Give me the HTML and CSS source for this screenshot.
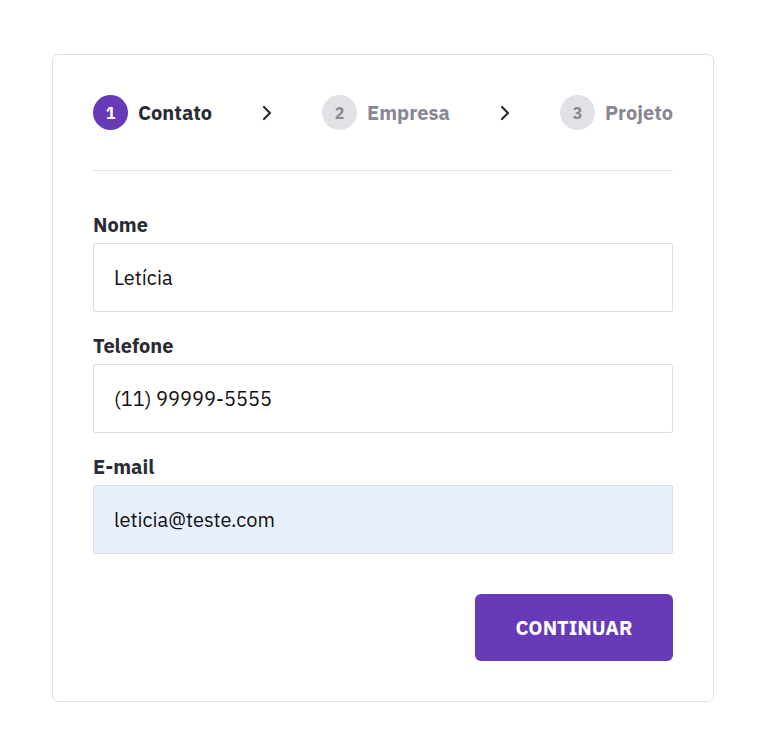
FILE: index.html
```html
<!DOCTYPE html>
<html lang="pt-BR">
<head>
<meta charset="utf-8">
<title>Cadastro</title>
<link rel="stylesheet" href="styles.css">
</head>
<body>
<div class="card">
  <div class="stepper">
    <div class="step step-active"><span class="step-num">1</span><span class="step-label">Contato</span></div>
    <svg class="chev" width="12" height="16" viewBox="0 0 12 16"><polyline points="3,2 9,8 3,14" fill="none" stroke="#2b2b33" stroke-width="2.2" stroke-linecap="round" stroke-linejoin="round"/></svg>
    <div class="step"><span class="step-num">2</span><span class="step-label">Empresa</span></div>
    <svg class="chev" width="12" height="16" viewBox="0 0 12 16"><polyline points="3,2 9,8 3,14" fill="none" stroke="#2b2b33" stroke-width="2.2" stroke-linecap="round" stroke-linejoin="round"/></svg>
    <div class="step"><span class="step-num">3</span><span class="step-label">Projeto</span></div>
  </div>
  <form class="form">
    <div class="field">
      <label class="label">Nome</label>
      <div class="input">Letícia</div>
    </div>
    <div class="field">
      <label class="label">Telefone</label>
      <div class="input">(11) 99999-5555</div>
    </div>
    <div class="field">
      <label class="label">E-mail</label>
      <div class="input input-filled">leticia@teste.com</div>
    </div>
    <div class="actions">
      <button type="button" class="btn">CONTINUAR</button>
    </div>
  </form>
</div>
</body>
</html>
```
FILE: styles.css
```css
* { box-sizing: border-box; }
body {
  margin: 0;
  padding: 54px 0 0 52px;
  background: #fff;
  font-family: "IBM Plex Sans", "Noto Sans", "Open Sans", sans-serif;
  color: #2b2b33;
}
.card {
  width: 662px;
  height: 648px;
  border: 1px solid #e1e1e4;
  border-radius: 6px;
  padding: 40px;
}
.stepper {
  display: flex;
  align-items: center;
  justify-content: space-between;
  height: 35px;
}
.step {
  display: flex;
  align-items: center;
  gap: 10px;
}
.step-num {
  width: 35px;
  height: 35px;
  border-radius: 50%;
  background: #e2e1e6;
  color: #8a8793;
  font-size: 16px;
  font-weight: 700;
  display: flex;
  align-items: center;
  justify-content: center;
}
.step-label {
  font-size: 20px;
  font-weight: 700;
  color: #8a8793;
}
.step-active .step-num { background: #673ab7; color: #fff; }
.step-active .step-label { color: #2b2b33; }
.chev { display: block; }
.form {
  margin-top: 40px;
  border-top: 1px solid #e4e4e7;
  padding-top: 42px;
  display: flex;
  flex-direction: column;
  gap: 22px;
}
.field { display: flex; flex-direction: column; }
.label {
  font-size: 20px;
  font-weight: 700;
  line-height: 24px;
  margin-bottom: 6px;
  color: #2b2b33;
}
.input {
  height: 69px;
  border: 1px solid #dedede;
  border-radius: 2px;
  padding: 0 20px;
  display: flex;
  align-items: center;
  font-size: 20px;
  color: #111;
}
.input-filled { background: #e8f0fe; }
.actions {
  display: flex;
  justify-content: flex-end;
  margin-top: 18px;
}
.btn {
  width: 198px;
  height: 67px;
  border: 0;
  border-radius: 6px;
  background: #673ab7;
  color: #fff;
  font-family: inherit;
  font-size: 20px;
  font-weight: 700;
}
```
